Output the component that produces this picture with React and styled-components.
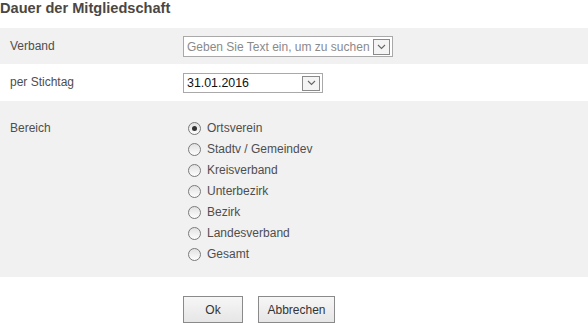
import React from "react";
import styled, { createGlobalStyle } from "styled-components";

const Global = createGlobalStyle`
  html, body { margin: 0; padding: 0; background: #fff; }
  body { font-family: "Liberation Sans", Arial, sans-serif; font-size: 12px; color: #4a4a4a; }
  * { box-sizing: border-box; }
`;

const Page = styled.div`
  width: 588px;
  display: flex;
  flex-direction: column;
`;

const Title = styled.h1`
  margin: 0;
  height: 28px;
  font-size: 14.6px;
  line-height: 17px;
  font-weight: bold;
  color: #4b4744;
`;

const Row = styled.div`
  display: grid;
  grid-template-columns: 183px 1fr;
  background: ${(p) => (p.$shaded ? "#f1f1f1" : "#fff")};
  height: ${(p) => p.$h}px;
  padding-top: ${(p) => p.$pt}px;
`;

const Label = styled.div`
  padding-left: 10px;
  padding-top: ${(p) => p.$pt || 0}px;
  color: #4e4e4e;
  font-size: 12px;
  line-height: 15px;
`;

const SelectBox = styled.div`
  width: ${(p) => p.$w}px;
  height: ${(p) => p.$h}px;
  border: 1px solid #a9a9a9;
  background: #fff;
  display: flex;
  align-items: center;
  justify-content: space-between;
  padding: 0 2px 0 3px;
  font-size: ${(p) => p.$fs}px;
  white-space: nowrap;
  color: ${(p) => (p.$muted ? "#8a8a8a" : "#111")};
`;

const Arrow = styled.span`
  flex: none;
  width: ${(p) => p.$w}px;
  height: ${(p) => p.$h}px;
  border: 1px solid #8a8a8a;
  background: #f4f4f4;
  display: flex;
  align-items: center;
  justify-content: center;
`;

const RadioList = styled.div`
  display: flex;
  flex-direction: column;
  gap: 7px;
  padding-left: 5px;
`;

const RadioRow = styled.label`
  display: flex;
  align-items: center;
  gap: 6px;
  height: 14px;
  color: #4e4e4e;
  font-size: 12px;
`;

const Circle = styled.span`
  width: 13px;
  height: 13px;
  border-radius: 50%;
  border: 1px solid #7a7a7a;
  background: linear-gradient(#e2e2e2, #fdfdfd);
  display: flex;
  align-items: center;
  justify-content: center;
  &::after {
    content: "";
    width: 5px;
    height: 5px;
    border-radius: 50%;
    background: ${(p) => (p.$checked ? "#333" : "transparent")};
  }
`;

const Buttons = styled.div`
  display: flex;
  gap: 15px;
  padding-left: 183px;
  padding-top: 19px;
`;

const Button = styled.button`
  height: 27px;
  width: ${(p) => p.$w}px;
  border: 1px solid #8a8a8a;
  background: linear-gradient(#f6f6f6, #e6e6e6);
  font-family: inherit;
  font-size: 12px;
  color: #333;
  padding: 0;
`;

const Chevron = () => (
  <svg width="9" height="6" viewBox="0 0 9 6">
    <path d="M1 1 L4.5 4.5 L8 1" fill="none" stroke="#666" strokeWidth="1.1" />
  </svg>
);

const options = [
  "Ortsverein",
  "Stadtv / Gemeindev",
  "Kreisverband",
  "Unterbezirk",
  "Bezirk",
  "Landesverband",
  "Gesamt",
];

export default function App() {
  return (
    <Page>
      <Global />
      <Title>Dauer der Mitgliedschaft</Title>
      <Row $shaded $h={36} $pt={8}>
        <Label $pt={3}>Verband</Label>
        <div>
          <SelectBox $w={210} $h={21} $fs={12} $muted>
            <span>Geben Sie Text ein, um zu suchen</span>
            <Arrow $w={17} $h={16}><Chevron /></Arrow>
          </SelectBox>
        </div>
      </Row>
      <Row $h={37} $pt={9}>
        <Label $pt={2}>per Stichtag</Label>
        <div>
          <SelectBox $w={140} $h={20} $fs={12.4}>
            <span>31.01.2016</span>
            <Arrow $w={18} $h={15}><Chevron /></Arrow>
          </SelectBox>
        </div>
      </Row>
      <Row $shaded $h={176} $pt={20}>
        <Label>Bereich</Label>
        <RadioList>
          {options.map((o, i) => (
            <RadioRow key={o}>
              <Circle $checked={i === 0} />
              {o}
            </RadioRow>
          ))}
        </RadioList>
      </Row>
      <Buttons>
        <Button $w={60}>Ok</Button>
        <Button $w={77}>Abbrechen</Button>
      </Buttons>
    </Page>
  );
}
